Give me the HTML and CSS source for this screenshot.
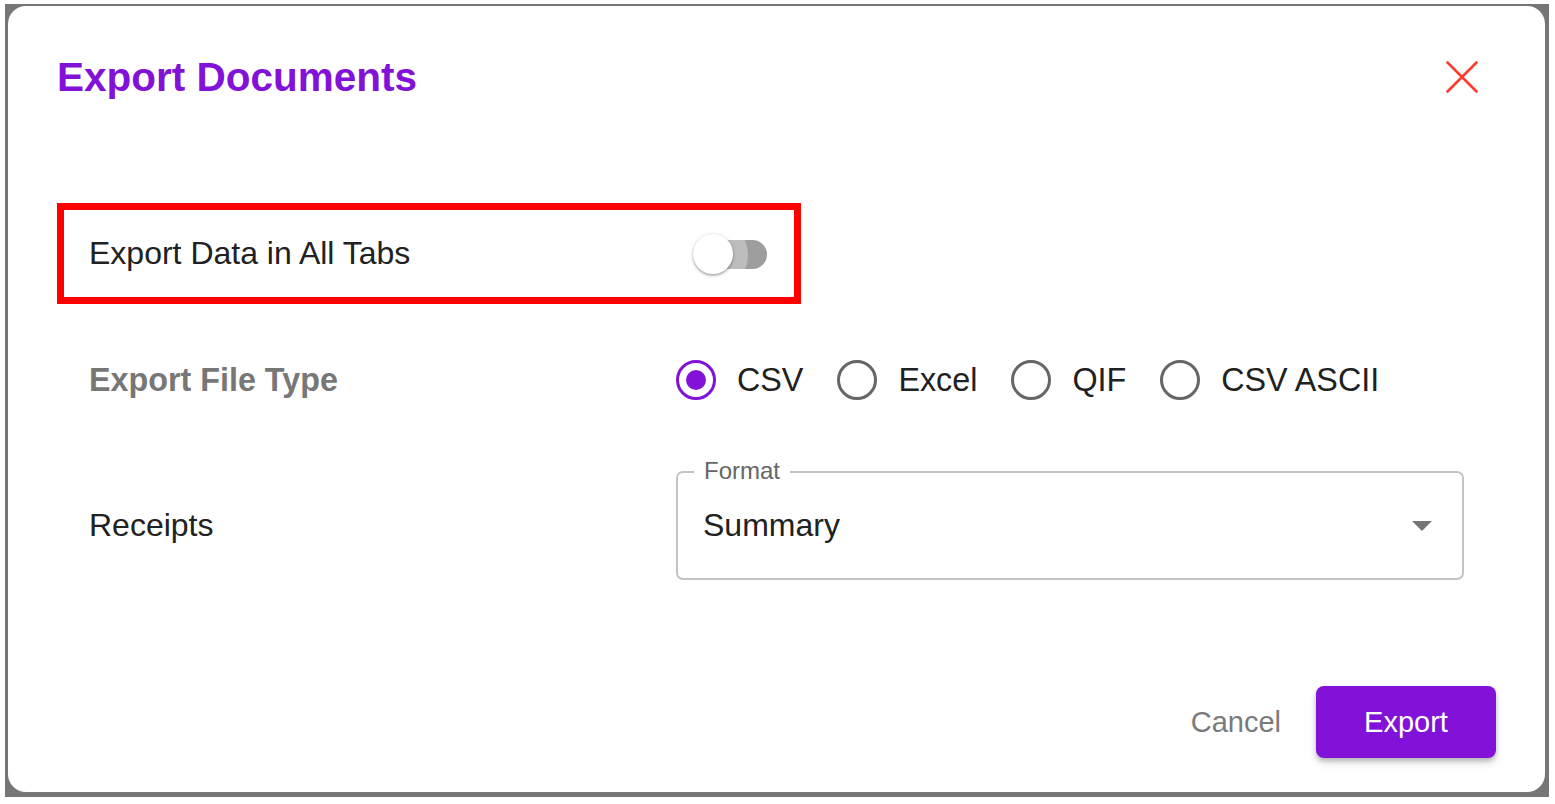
FILE: index.html
```html
<!DOCTYPE html>
<html>
<head>
<meta charset="utf-8">
<link rel="stylesheet" href="styles.css">
</head>
<body>
<div class="frame">
  <div class="dialog">
    <div class="header">
      <h1 class="title">Export Documents</h1>
      <button class="close" aria-label="Close">
        <svg width="32" height="32" viewBox="0 0 32 32"><path d="M1.5 1.5 L30.5 30.5 M30.5 1.5 L1.5 30.5" stroke="#ff3b30" stroke-width="2.6" stroke-linecap="round" fill="none"/></svg>
      </button>
    </div>

    <div class="highlight">
      <span class="text">Export Data in All Tabs</span>
      <span class="switch"><span class="track"></span><span class="thumb"></span></span>
    </div>

    <div class="row row-type">
      <div class="label label-muted">Export File Type</div>
      <div class="radios">
        <label class="radio checked"><span class="ring"></span><span class="rtext">CSV</span></label>
        <label class="radio"><span class="ring"></span><span class="rtext">Excel</span></label>
        <label class="radio"><span class="ring"></span><span class="rtext">QIF</span></label>
        <label class="radio"><span class="ring"></span><span class="rtext">CSV ASCII</span></label>
      </div>
    </div>

    <div class="row row-receipts">
      <div class="label">Receipts</div>
      <div class="select">
        <span class="legend">Format</span>
        <span class="value">Summary</span>
        <span class="arrow"></span>
      </div>
    </div>

    <div class="actions">
      <button class="btn-cancel">Cancel</button>
      <button class="btn-export">Export</button>
    </div>
  </div>
</div>
</body>
</html>
```

FILE: styles.css
```css
* { box-sizing: border-box; }
html, body { margin: 0; padding: 0; background: #fff; }
body { font-family: "Liberation Sans", Arial, sans-serif; color: #212121; }

.frame {
  margin: 4px 0 0 5px;
  width: 1544px;
  height: 793px;
  background: #767676;
  padding: 2px 4px 5px 3px;
}

.dialog {
  width: 100%;
  height: 100%;
  background: #fff;
  border-radius: 18px;
  padding: 0 49px 34px 49px;
  display: flex;
  flex-direction: column;
}

.header {
  margin-top: 46px;
  height: 50px;
  display: flex;
  align-items: center;
  justify-content: space-between;
}
.title {
  margin: 0;
  font-size: 40.5px;
  line-height: 50px;
  font-weight: 700;
  color: #8212d7;
}
.close {
  border: 0;
  background: none;
  padding: 0;
  margin-right: 18px;
  width: 32px;
  height: 32px;
  display: flex;
}

.highlight {
  margin-top: 101px;
  width: 744px;
  height: 101px;
  border: 7px solid #ff0000;
  display: flex;
  align-items: center;
  justify-content: space-between;
  padding: 0 27px 0 25px;
  font-size: 32px;
}

.switch {
  position: relative;
  width: 74px;
  height: 40px;
  display: block;
}
.track {
  position: absolute;
  left: 7px;
  top: 6px;
  width: 67px;
  height: 29px;
  border-radius: 15px;
  background: #9e9e9e;
  overflow: hidden;
}
.track::before {
  content: "";
  position: absolute;
  left: -22px;
  top: -20px;
  width: 70px;
  height: 70px;
  border-radius: 50%;
  background: #bdbdbd;
}
.thumb {
  position: absolute;
  left: 0;
  top: 0;
  width: 40px;
  height: 40px;
  border-radius: 50%;
  background: #fff;
  box-shadow: 0 2px 2px rgba(0,0,0,0.22), 0 0 2px rgba(0,0,0,0.14), 0 1px 5px rgba(0,0,0,0.1);
}

.row {
  display: flex;
  align-items: center;
  padding: 0 32px;
  font-size: 32px;
}
.label { width: 587px; flex: none; }
.label-muted { color: #777; font-weight: 700; font-size: 32.3px; }

.row-type { margin-top: 48px; height: 56px; }

.radios { display: flex; align-items: center; }
.radio {
  display: flex;
  align-items: center;
  margin-right: 34px;
}
.ring {
  width: 40px;
  height: 40px;
  border-radius: 50%;
  border: 3px solid #666;
  display: flex;
  align-items: center;
  justify-content: center;
  margin-right: 21px;
}
.radio.checked .ring { border-color: #8212d7; }
.radio.checked .ring::after {
  content: "";
  width: 20px;
  height: 20px;
  border-radius: 50%;
  background: #8212d7;
}
.rtext { color: #212121; font-size: 32.3px; }

.row-receipts { margin-top: 63px; height: 109px; }
.select {
  position: relative;
  width: 788px;
  height: 109px;
  border: 2px solid #c4c4c4;
  border-radius: 7px;
  display: flex;
  align-items: center;
  justify-content: space-between;
  padding: 0 30px 0 25px;
}
.legend {
  position: absolute;
  left: 16px;
  top: -17px;
  padding: 0 10px;
  background: #fff;
  font-size: 24px;
  line-height: 30px;
  color: #666;
}
.value { color: #212121; }
.arrow {
  width: 0;
  height: 0;
  border-left: 10px solid transparent;
  border-right: 10px solid transparent;
  border-top: 10px solid #757575;
}

.actions {
  margin-top: 106px;
  height: 72px;
  display: flex;
  justify-content: flex-end;
  align-items: center;
  gap: 35px;
}
button { font-family: inherit; cursor: pointer; }
.btn-cancel {
  border: 0;
  background: none;
  padding: 0;
  font-size: 29px;
  color: #7b7b7b;
}
.btn-export {
  width: 180px;
  height: 72px;
  border: 0;
  border-radius: 8px;
  background: #8212d7;
  color: #fff;
  font-size: 29px;
  box-shadow: 0 3px 4px rgba(0,0,0,0.2), 0 5px 9px rgba(0,0,0,0.12);
}
```
